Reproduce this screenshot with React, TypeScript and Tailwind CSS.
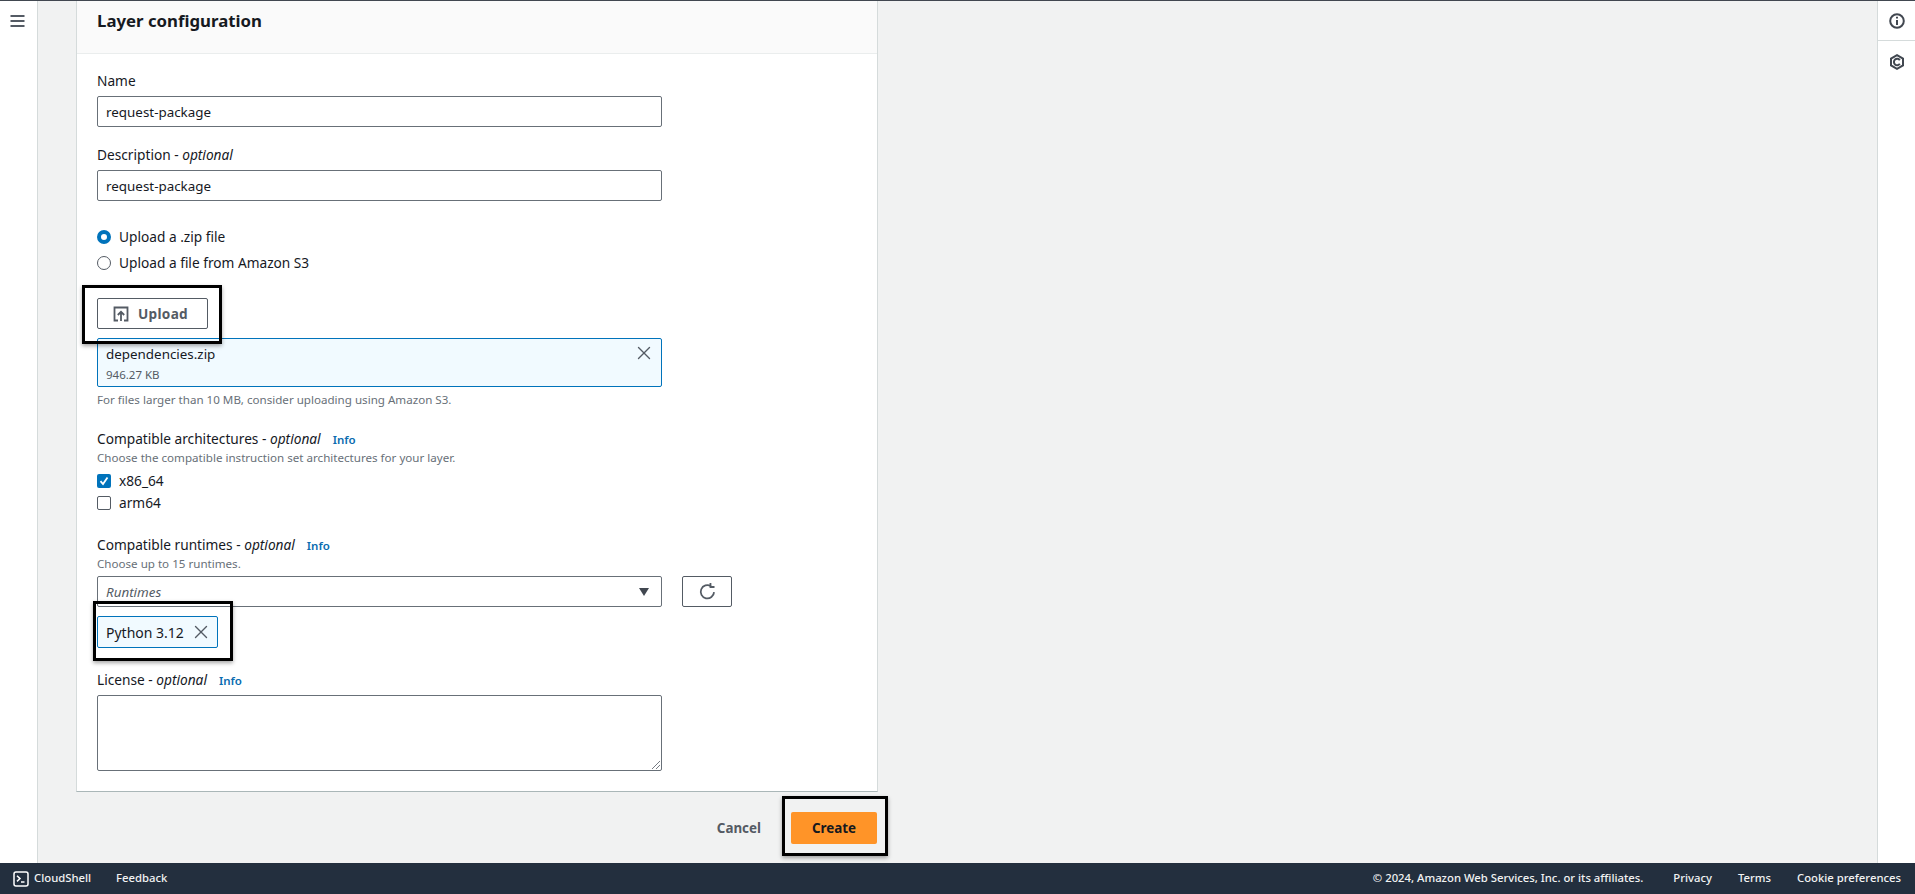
import { X } from 'lucide-react';

// Black call-out frame drawn over the screenshot's highlighted controls
function Callout({ className }: { className: string }) {
  return (
    <div
      className={`pointer-events-none absolute z-10 border-[3px] border-black shadow-[0_2px_4px_rgba(0,0,0,0.35)] ${className}`}
    />
  );
}

function Optional({ label }: { label: string }) {
  return (
    <>
      {label} - <i>optional</i>
    </>
  );
}

function Info() {
  return <span className="ml-3 text-[11.5px] font-semibold text-[#0a6cb0]">Info</span>;
}

function TextField({ label, value }: { label: React.ReactNode; value: string }) {
  return (
    <>
      <div className="h-5 text-[13.7px] leading-5">{label}</div>
      <div className="mt-[5px] flex h-[31px] w-[565px] items-center rounded-[2px] border border-[#687078] bg-white px-[8px] pt-px text-[13.4px]">
        {value}
      </div>
    </>
  );
}

export default function App() {
  return (
    <div className="flex h-[894px] w-[1915px] flex-col overflow-hidden border-t border-[#414750] bg-[#f1f2f2] font-['Noto_Sans',sans-serif] text-[#16191f]">
      <div className="flex min-h-0 flex-1">
        {/* left nav */}
        <div className="flex w-[38px] shrink-0 justify-center border-r border-[#d5dbdb] bg-white pt-[13px] pr-[3px]">
          <svg width="15" height="14" viewBox="0 0 15 14" fill="none" stroke="#545b64" strokeWidth="2">
            <path d="M0.5 2h14M0.5 7h14M0.5 12h14" />
          </svg>
        </div>

        {/* content */}
        <div className="flex-1 pl-[38px]">
          <div className="w-[802px] border-x border-b border-x-[#d5dbdb] border-b-[#aab7b8] bg-white">
            <div className="h-[53px] border-b border-[#eaeded] bg-[#fafafa] px-[20px] pt-[8px] text-[16.8px] leading-6 font-bold">
              Layer configuration
            </div>

            <div className="px-[20px] pt-[17px] pb-[20px]">
              <TextField label="Name" value="request-package" />
              <div className="mt-[18px]">
                <TextField label={<Optional label="Description" />} value="request-package" />
              </div>

              <div className="mt-[26px] flex h-5 items-center gap-2 text-[13.7px]">
                <span className="h-[14px] w-[14px] rounded-full border-[4px] border-[#0073bb] bg-white" />
                Upload a .zip file
              </div>
              <div className="mt-[6px] flex h-5 items-center gap-2 text-[13.7px]">
                <span className="h-[14px] w-[14px] rounded-full border border-[#545b64] bg-white" />
                Upload a file from Amazon S3
              </div>

              <div className="relative mt-[25px] w-[111px]">
                <div className="flex h-[31px] items-center justify-center gap-[9px] rounded-[2px] border border-[#545b64] bg-white pt-px pr-[4px] text-[13.6px] font-bold tracking-[0.3px] text-[#545b64]">
                  <svg width="16" height="16" viewBox="0 0 16 16" fill="none" stroke="#545b64" strokeWidth="1.8">
                    <path d="M5 14.5H1.5v-13h13v13H11" />
                    <path d="M8 15V6M4.8 9 8 5.8 11.2 9" />
                  </svg>
                  Upload
                </div>
                <Callout className="-top-[13px] -left-[15px] h-[59px] w-[140px]" />
              </div>

              <div className="mt-[9px] flex h-[49px] w-[565px] justify-between rounded-[2px] border border-[#0073bb] bg-[#f1faff] pr-[6px] pl-[8px]">
                <div>
                  <div className="mt-[5px] text-[13.4px] leading-5">dependencies.zip</div>
                  <div className="mt-[3px] text-[11.5px] leading-4 text-[#545b64]">946.27 KB</div>
                </div>
                <X className="mt-[3px] h-[22px] w-[22px] text-[#545b64]" strokeWidth={1.5} />
              </div>
              <div className="mt-[5px] text-[11.6px] leading-4 text-[#687078]">
                For files larger than 10 MB, consider uploading using Amazon S3.
              </div>

              <div className="mt-[21px] h-5 text-[13.7px] leading-5">
                <Optional label="Compatible architectures" />
                <Info />
              </div>
              <div className="mt-px text-[11.6px] leading-4 text-[#687078]">
                Choose the compatible instruction set architectures for your layer.
              </div>
              <div className="mt-[5px] flex h-5 items-center gap-2 text-[13.7px]">
                <span className="flex h-[14px] w-[14px] items-center justify-center rounded-[2px] bg-[#0073bb]">
                  <svg width="10" height="10" viewBox="0 0 10 10" fill="none" stroke="white" strokeWidth="1.8">
                    <path d="M1.5 5.2 4 8l4.5-6.5" />
                  </svg>
                </span>
                x86_64
              </div>
              <div className="mt-[2px] flex h-5 items-center gap-2 text-[13.7px]">
                <span className="h-[14px] w-[14px] rounded-[2px] border border-[#545b64] bg-white" />
                arm64
              </div>

              <div className="mt-[22px] h-5 text-[13.7px] leading-5">
                <Optional label="Compatible runtimes" />
                <Info />
              </div>
              <div className="mt-px text-[11.6px] leading-4 text-[#687078]">Choose up to 15 runtimes.</div>
              <div className="mt-[4px] flex gap-[20px]">
                <div className="flex h-[31px] w-[565px] items-center justify-between rounded-[2px] border border-[#687078] bg-white px-[8px] pt-px text-[13.4px] text-[#545b64] italic">
                  Runtimes
                  <svg width="12" height="10" viewBox="0 0 12 10" className="mr-[3px]">
                    <path d="M1 1h10L6 9z" fill="#414750" />
                  </svg>
                </div>
                <div className="flex h-[31px] w-[50px] items-center justify-center rounded-[2px] border border-[#545b64] bg-white">
                  <svg width="19" height="19" viewBox="0 0 16 16" fill="none" stroke="#545b64" strokeWidth="1.5">
                    <path d="M13.5 8.5a5.6 5.6 0 1 1-2.6-5" />
                    <path d="M10.5 0.8v3.4h3.4" />
                  </svg>
                </div>
              </div>

              <div className="relative mt-[9px] w-[121px]">
                <div className="flex h-[32px] items-center justify-between rounded-[2px] border border-[#0073bb] bg-[#f1faff] pr-[5px] pl-[8px] text-[14px]">
                  Python 3.12
                  <X className="h-[22px] w-[22px] text-[#545b64]" strokeWidth={1.5} />
                </div>
                <Callout className="-top-[15px] -left-[4px] h-[60px] w-[140px]" />
              </div>

              <div className="mt-[22px] h-5 text-[13.7px] leading-5">
                <Optional label="License" />
                <Info />
              </div>
              <div className="relative mt-[5px] h-[76px] w-[565px] rounded-[2px] border border-[#687078] bg-white">
                <svg width="9" height="9" viewBox="0 0 9 9" className="absolute right-px bottom-px" stroke="#545b64" strokeWidth="0.8">
                  <path d="M1 9 9 1M5 9l4-4" />
                </svg>
              </div>
            </div>
          </div>

          {/* form actions */}
          <div className="mt-[20px] flex w-[801px] items-center justify-end gap-[30px]">
            <span className="text-[13.4px] font-bold text-[#545b64]">Cancel</span>
            <div className="relative">
              <div className="flex h-[32px] w-[86px] items-center justify-center rounded-[2px] bg-[#ff9428] text-[13.4px] font-bold text-[#16191f]">
                Create
              </div>
              <Callout className="-top-[16px] -left-[9px] h-[60px] w-[106px]" />
            </div>
          </div>
        </div>

        {/* right rail */}
        <div className="w-[38px] shrink-0 border-l border-[#d5dbdb] bg-white">
          <div className="flex h-[40px] items-center justify-center border-b border-[#d5dbdb]">
            <svg width="16" height="16" viewBox="0 0 16 16" fill="none" stroke="#414750" strokeWidth="2">
              <circle cx="8" cy="8" r="6.8" />
              <path d="M8 7v5M8 3.8v1.8" />
            </svg>
          </div>
          <div className="flex h-[42px] items-center justify-center">
            <svg width="16" height="16" viewBox="0 0 16 16" fill="none" stroke="#414750" strokeWidth="2">
              <path d="M8 1.2 14 4.6v6.8L8 14.8 2 11.4V4.6z" />
              <path d="M10.8 6.2A3.2 3.2 0 1 0 10.8 9.8" />
            </svg>
          </div>
        </div>
      </div>

      {/* footer */}
      <div className="flex h-[31px] shrink-0 items-center bg-[#232f3e] pr-[14px] pl-[13px] text-[11.3px] font-medium text-[#f2f3f3]">
        <svg width="16" height="16" viewBox="0 0 16 16" fill="none" stroke="white" strokeWidth="1.5">
          <rect x="1" y="1" width="14" height="14" rx="2" />
          <path d="M4 4.8 7 7.6 4 10.4M8 11h3.5" />
        </svg>
        <span className="ml-[5px]">CloudShell</span>
        <span className="ml-[25px]">Feedback</span>
        <span className="ml-auto">© 2024, Amazon Web Services, Inc. or its affiliates.</span>
        <span className="ml-[30px]">Privacy</span>
        <span className="ml-[26px]">Terms</span>
        <span className="ml-[26px]">Cookie preferences</span>
      </div>
    </div>
  );
}
